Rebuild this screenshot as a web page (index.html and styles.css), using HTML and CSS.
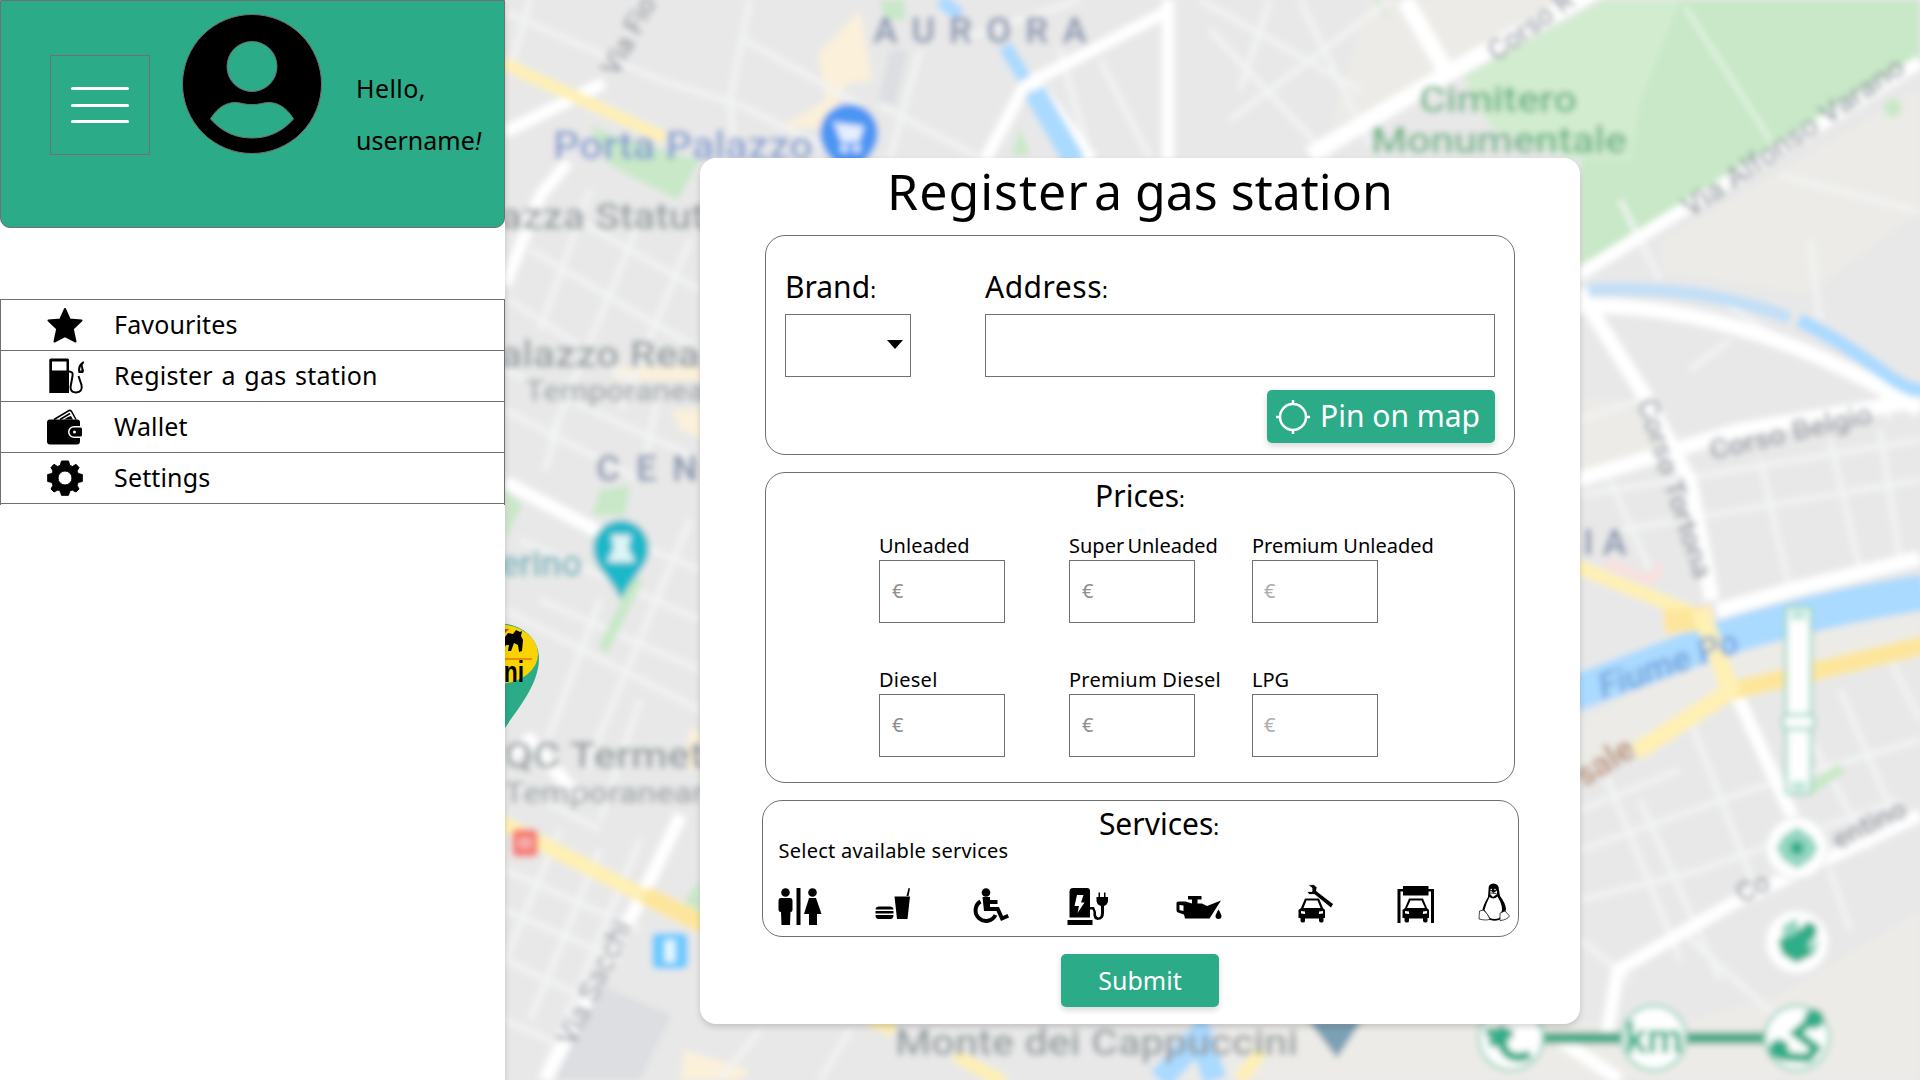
FILE: index.html
```html
<!DOCTYPE html>
<html lang="en">
<head>
<meta charset="utf-8">
<title>Register a gas station</title>
<link rel="stylesheet" href="styles.css">
</head>
<body>
<div class="app">
  <svg class="map" viewBox="0 0 1920 1080" aria-hidden="true">
    <defs>
      <filter id="soft" x="0" y="0" width="100%" height="100%"><feGaussianBlur stdDeviation="3.400"/></filter>
    </defs>
    <g filter="url(#soft)">
      <rect class="land" x="-20" y="-20" width="1960" height="1120"/>
      <g class="beige">
        <path d="M1370 0H1560L1450 72 1330 130Z"/>
        <path d="M1663 241 1920 90V210L1808 293 1663 272Z"/>
        <path d="M1581 720 1720 650 1920 612V650L1731 691 1581 770Z"/>
        <path d="M1580 1080V1050L1776 998 1920 912V1080Z"/>
        <path d="M1581 400 1630 400 1670 460 1581 475Z"/>
        <path d="M1230 1024H1600V1080H1180Z"/>
      </g>
      <g class="sand">
        <path d="M860 10 872 80 846 84 826 128 780 128 826 100 818 54Z"/>
        <path d="M615 367H705V380H615ZM672 410H705V440L680 430Z"/>
        <path d="M685 1050 750 1070 740 1080H680ZM688 730H700V770H688Z"/>
      </g>
      <path class="block" d="M890 50 908 50 895 105 878 100ZM600 985 672 1015 640 1080H555Z"/>
      <g class="park">
        <path d="M1604 0H1920V58L1581 265V158L1464 76Z"/>
        <path d="M590 125 625 140 700 160 678 200 610 165Z"/>
        <path d="M880 0H905V20H885ZM1373 0 1392 22 1380 0ZM1012 155 1020 128 1030 155ZM600 490 630 485 625 515 592 515ZM505 490 522 505 505 540ZM700 880 685 900 700 920Z"/>
        <circle cx="1893" cy="108" r="9"/>
      </g>
      <path class="cemetery" d="M1464 76 1604 0H1680L1640 103 1631 160H1575L1490 127Z"/>
      <g class="lane">
        <path d="M505 12 660 80 740 105 830 150M750 0 730 100 735 158M530 0 510 70M745 40 860 105M920 50 890 158M1060 50 1090 158M1100 60 1150 158M960 40 1080 0M1200 0 1360 90M1230 120 1390 0M1300 0 1370 145M1210 30 1330 158M1240 90 1270 0M880 105 980 158"/>
        <path d="M560 210 700 290M530 250 700 350M510 300 660 400M590 190 540 330M640 220 550 440M690 240 620 410M505 370 700 460M505 410 640 480M570 380 545 470M660 390 640 480"/>
        <path d="M520 540 700 620M580 520 700 570M600 600 540 760M690 520 585 770M505 610 700 710M540 600 700 670M640 700 600 820M505 870 640 930M560 830 505 960M600 850 530 1020M640 840 540 1080M505 910 620 960M505 960 590 1000M505 1020 560 1045M760 1030 720 1080M850 1030 820 1080M505 780 600 830"/>
        <path d="M1581 495 1920 440M1620 530 1920 480M1810 360 1720 300M1690 370 1730 340M1760 460 1790 590M1830 440 1860 570M1880 430 1900 560M1610 480 1650 570M1810 240 1820 320M1580 420 1640 400M1620 200 1660 280M1780 175 1920 212M1870 370 1890 420"/>
        <path d="M1581 850 1750 790 1920 740M1581 900 1700 870 1900 800M1600 760 1680 960M1690 720 1760 900M1640 800 1720 980M1800 720 1870 850M1840 690 1900 830M1890 660 1920 720M1581 940 1630 980M1680 930 1780 1020M1830 870 1850 930M1581 810 1680 770"/>
      </g>
      <g class="road">
        <path d="M505 132 604 83M568 162 540 196 505 285M1170 10 1025 85 985 160M1030 75 1092 160M1168 0V160" stroke-width="12"/>
        <path d="M1310 155 1450 72 1600 -12M1405 0 1445 69" stroke-width="17"/>
        <path d="M1570 280 1920 62" stroke-width="13"/>
        <path d="M1570 306Q1740 300 1920 410M1578 290 1645 396 1690 482 1712 600M1570 482 1740 430 1920 400M1717 611 1790 590 1920 558" stroke-width="15"/>
        <path d="M1735 691 1803 840M1920 815 1735 902 1618 970 1606 1040M1560 1040 1620 1080" stroke-width="13"/>
        <path d="M505 482 605 535M681 815 645 890 545 1080M505 760 530 740 580 800" stroke-width="13"/>
        <path d="M1685 7 1771 141" stroke-width="5" opacity=".45"/>
      </g>
      <g class="water">
        <path d="M940 0 960 15M1005 46 1025 79" stroke-width="14"/>
        <path d="M1034 91 1075 162" stroke-width="22"/>
        <path class="pale" d="M1588 290Q1700 284 1790 318" stroke-width="13"/>
        <path d="M1799 320Q1840 340 1880 370T1925 385" stroke-width="14"/>
        <path d="M1570 695 1717 640Q1820 608 1925 592" stroke-width="36"/>
        <path d="M1160 1080 1200 1035 1215 1080" stroke-width="24"/>
      </g>
      <g class="highway">
        <path d="M500 62 665 138" stroke-width="12"/>
        <path d="M500 822 700 925" stroke-width="15"/>
        <path class="deep" d="M645 895 705 925M1731 691 1925 645" stroke-width="19"/>
        <path d="M1575 566 1690 612" stroke-width="14"/>
        <path class="deep" d="M1664 622 1712 618" stroke-width="24"/>
        <path d="M1700 610 1731 691 1636 752" stroke-width="18"/>
        <path d="M955 1055 1005 1083M870 1020 895 1030M1262 1050 1240 1080" stroke-width="13"/>
      </g>
      <path class="park-line" d="M638 578 603 650M1808 790 1842 768"/>
      <path class="pink" d="M1605 562 1650 580 1662 565"/>
      <path class="cart-pin" d="M849 104a29 29 0 0 1 29 29c0 18-15 30-29 44-14-14-29-26-29-44a29 29 0 0 1 29-29Z"/>
      <path class="white" d="M832 121 838 123 864 126 859 142H841L836 127ZM841 145H848V152H841ZM853 145H860V152H853Z"/>
      <path class="teal-pin" d="M621 520a28 28 0 0 1 28 28c0 19-17 28-28 52-11-24-28-33-28-52a28 28 0 0 1 28-28Z"/>
      <path class="white" d="M611 535H631L628 548 635 562H607L614 548Z"/>
      <rect class="stop" x="512" y="829" width="26" height="28" rx="5"/>
      <path class="pink" d="M518 843H532" opacity=".5"/>
      <rect class="station" x="652" y="933" width="36" height="36" rx="6"/>
      <path class="white" d="M665 940H675V962H665Z"/>
      <path class="poi" d="M1308 1020H1362L1337 1058Z"/>
      <g class="place">
        <text x="873" y="43" class="district" textLength="214">AURORA</text>
        <text x="596" y="481" class="district" textLength="102">CEN</text>
        <text x="1583" y="555" class="district" textLength="44">IA</text>
        <text x="553" y="159" class="shop" textLength="260" lengthAdjust="spacingAndGlyphs">Porta Palazzo</text>
        <text x="500" y="229" class="sight" textLength="205" lengthAdjust="spacingAndGlyphs">azza Statut</text>
        <text x="500" y="367" class="sight" textLength="200" lengthAdjust="spacingAndGlyphs">alazzo Rea</text>
        <text x="525" y="401" class="note" textLength="180" lengthAdjust="spacingAndGlyphs">Temporanea</text>
        <text x="500" y="576" class="museum" textLength="82" lengthAdjust="spacingAndGlyphs">erino</text>
        <text x="504" y="768" class="sight" textLength="200" lengthAdjust="spacingAndGlyphs">QC Termet</text>
        <text x="504" y="803" class="note" textLength="200" lengthAdjust="spacingAndGlyphs">Temporanear</text>
        <text x="895" y="1055" class="sight" textLength="403" lengthAdjust="spacingAndGlyphs">Monte dei Cappuccini</text>
        <text x="1419" y="112" class="green" textLength="158" lengthAdjust="spacingAndGlyphs">Cimitero</text>
        <text x="1371" y="153" class="green" textLength="256" lengthAdjust="spacingAndGlyphs">Monumentale</text>
        <g class="street">
          <text transform="translate(617 78) rotate(-62)">Via Fio</text>
          <text transform="translate(1496 62) rotate(-36)">Corso R</text>
          <text transform="translate(1690 218) rotate(-34)" textLength="262" lengthAdjust="spacingAndGlyphs">Via Alfonso Varano</text>
          <text transform="translate(1712 460) rotate(-13)" textLength="166" lengthAdjust="spacingAndGlyphs">Corso Belgio</text>
          <text transform="translate(1637 402) rotate(72)" textLength="188" lengthAdjust="spacingAndGlyphs">Corso Tortona</text>
          <text transform="translate(573 1048) rotate(-64)" textLength="136" lengthAdjust="spacingAndGlyphs">Via Sacchi</text>
          <text transform="translate(1742 904) rotate(-28)">Co</text>
          <text transform="translate(1838 850) rotate(-26)">entino</text>
        </g>
        <text class="river" transform="translate(1603 699) rotate(-19)" textLength="146" lengthAdjust="spacingAndGlyphs">Fiume Po</text>
        <text class="brown" transform="translate(1584 788) rotate(-32)">sale</text>
      </g>
      <g class="disc">
        <path class="link" d="M1511 1038H1797"/>
        <rect x="1786" y="607" width="25" height="187" rx="3"/>
        <rect x="1783" y="715" width="31" height="14" rx="4"/>
        <circle class="plain" cx="1797" cy="848" r="31"/>
        <circle class="plain" cx="1797" cy="942" r="32"/>
        <circle cx="1511" cy="1038" r="32"/>
        <circle cx="1654" cy="1038" r="32"/>
        <circle cx="1797" cy="1038" r="32"/>
      </g>
      <path class="mint" d="M1791 610H1806V620H1791ZM1791 781H1806V791H1791Z" opacity=".6"/>
      <path class="mint" d="M1797 827 1811 836 1818 848 1811 860 1797 869 1783 860 1776 848 1783 836Z"/>
      <circle class="accent" cx="1797" cy="848" r="7"/>
      <path class="mint" d="M1783 925 1797 918 1800 935 1782 938ZM1808 945 1819 940 1815 955 1806 957Z"/>
      <path class="accent" d="M1778 940 1795 934 1808 921 1817 926 1816 937 1808 944 1811 956 1796 963 1782 954Z"/>
      <path class="glyph" d="M1530 1054C1510 1064 1496 1049 1503 1026M1486 1032 1513 1034M1489 1042H1508M1814 1018 1796 1033 1816 1048 1808 1058 1780 1056"/>
      <circle class="accent" cx="1814" cy="1019" r="10"/>
      <circle class="accent" cx="1779" cy="1049" r="10"/>
      <text class="km" x="1625" y="1053" textLength="58" lengthAdjust="spacingAndGlyphs">km</text>
    </g>
    <g>
      <path class="eni-pin" d="M500 623.500C523 623.500 539 640 539 658 539 684 519 707 505 728L480 740V624Z"/>
      <ellipse class="eni-badge" cx="500" cy="654" rx="38" ry="29.500"/>
      <path d="M505 637 508 633 513 634 516 630 520 632 522 631 521 636 523 640 522 651 519 652 518 645 514 643 511 651 508 651 509 645 506 645 503 650Z"/>
      <path class="eni-red" d="M500 629 509 629 505 633ZM500 658.500H532V659.500H500Z"/>
      <text class="eni-text" x="491" y="682" textLength="33" lengthAdjust="spacingAndGlyphs">eni</text>
    </g>
  </svg>

  <aside class="sidebar">
    <header class="profile">
      <button class="burger" aria-label="Menu"><span></span><span></span><span></span></button>
      <svg class="avatar" viewBox="0 0 140 140">
        <path fill-rule="evenodd" stroke="#707070" d="M70 .5a69.500 69.500 0 1 1 0 139 69.500 69.500 0 1 1 0-139ZM70 27.500a25 25 0 1 0 0 50 25 25 0 1 0 0-50ZM28.500 105C41 119 55 124 70 124S99 119 111.500 105C104 92 92 86 80 89.500 72 91 68 91 60 89.500 48 86 36 92 28.500 105Z"/>
      </svg>
      <p class="greeting"><span class="hello">Hello,</span><br><span class="user">username<i>!</i></span></p>
    </header>
    <nav class="menu">
      <a class="item"><svg viewBox="0 0 36 36"><path stroke="#000" stroke-width="2" stroke-linejoin="round" d="M18 2 22.700 12.500 34.500 13.500 25.800 21.800 28.500 34.500 18 29 7.500 34.500 10.200 21.800 1.500 13.500 13.300 12.500Z"/></svg><span class="t-fav">Favourites</span></a>
      <a class="item"><svg viewBox="0 0 36 36"><path fill-rule="evenodd" d="M2.300 2Q2.300.500 4 .500H20.500Q22 .500 22 2V35H2.300ZM5 3.500V12.500H19.500V3.500Z"/><path fill="none" stroke="#000" stroke-width="2" d="M22 13.500Q26.500 13.500 25.500 18L23.500 29Q23.500 34.500 29 34.500 36 34 34.500 27L31.500 18"/><path fill-rule="evenodd" d="M36.500 3 37 5 35.500 7 37 13 36 15 31.500 15 31 12Q31 6 36.500 3ZM34 8 32.800 12.500H34.500Z"/></svg><span class="t-reg">Register a gas station</span></a>
      <a class="item"><svg viewBox="0 0 36 36"><path d="M3 10.500H30Q33 10.500 33 13.500V17H27A6 6 0 0 0 27 29H33V32Q33 35.500 30 35.500H3Q0 35.500 0 32.500V13.500Q0 10.500 3 10.500Z"/><path fill="none" stroke="#000" stroke-width="1.500" d="M7 10.500 22 1.500Q23.500 1 24.500 2.500L29 10.500M13 10.500 23 4.500"/><path fill-rule="evenodd" d="M27 18.500H33.500Q35 18.500 35 20V26Q35 27.500 33.500 27.500H27A4.500 4.500 0 0 1 27 18.500ZM27.500 21.500A1.500 1.500 0 1 0 27.500 24.500 1.500 1.500 0 1 0 27.500 21.500Z"/><path d="M21 8 24 7 26 10.500H17Z"/></svg><span class="t-wal">Wallet</span></a>
      <a class="item"><svg viewBox="0 0 36 36"><path fill-rule="evenodd" stroke="#000" stroke-linejoin="round" d="M14.500 1H21.500L22.700 5.300 25.500 6.500 29 4.300 32 7.500 30 11 31.200 13.600 35.300 14.500V21.500L31.200 22.400 30 25.200 32 29 29 32 25.200 30 22.700 31.200 21.500 35.300H14.500L13.300 31.200 10.800 30 7 32 4 29 6 25.200 4.800 22.400.700 21.500V14.500L4.800 13.600 6 11 4 7.500 7 4.300 10.500 6.500 13.300 5.300ZM18 11A7 7 0 1 0 18 25 7 7 0 1 0 18 11Z"/></svg><span class="t-set">Settings</span></a>
    </nav>
  </aside>

  <main class="stage">
    <form class="dialog">
      <h1><span class="lead">Register</span> a gas station</h1>
      <section class="box place-box">
        <div class="fields">
          <div class="field"><label class="big t-brand">Brand<i>:</i></label><div class="input select"><span class="caret"></span></div></div>
          <div class="field"><label class="big t-addr">Address<i>:</i></label><div class="input"></div></div>
        </div>
        <button type="button" class="btn pin">
          <svg viewBox="0 0 34 34"><g fill="none" stroke="#fff" stroke-width="2.500"><circle cx="17" cy="17" r="13"/><path d="M17 0V5M17 29V34M0 17H5M29 17H34"/></g></svg>
          <span class="t-pin">Pin on map</span>
        </button>
      </section>
      <section class="box prices">
        <h2 class="big t-prices">Prices<i>:</i></h2>
        <div class="price-grid">
          <div class="price"><label>Unleaded</label><div class="input">€</div></div>
          <div class="price"><label class="super">Super Unleaded</label><div class="input">€</div></div>
          <div class="price light"><label>Premium Unleaded</label><div class="input">€</div></div>
          <div class="price"><label class="wide">Diesel</label><div class="input">€</div></div>
          <div class="price"><label class="wide">Premium Diesel</label><div class="input">€</div></div>
          <div class="price light"><label>LPG</label><div class="input">€</div></div>
        </div>
      </section>
      <section class="box services">
        <h2 class="big t-serv">Services<i>:</i></h2>
        <p class="hint">Select available services</p>
        <div class="icons">
          <svg width="44" height="42" viewBox="0 0 44 42"><circle cx="7.500" cy="9.500" r="4.300"/><path d="M3 15H12Q14.500 15 14.500 18V27Q14.500 29 12.500 29L12 42H3.500L3 29Q.500 29 .500 27V18Q.500 15 3 15ZM18.500 5H22.500V42H18.500ZM31 15H38L43.500 31H39V42H31V31H26Z"/><circle cx="34.500" cy="9.500" r="4.300"/></svg>
          <svg width="36" height="42" viewBox="0 0 36 42"><path d="M19.500 13.500H35L32.500 36H22ZM31.500 13 33.500 5 35 5.500 33.500 13ZM3.500 23.500H15.500Q18.500 24 18.500 26.500H.500Q.500 24 3.500 23.500ZM.500 28H18.500V30.500H.500ZM.500 32H18.500Q18.500 36 15.500 36H3.500Q.500 36 .500 32Z"/></svg>
          <svg width="38" height="42" viewBox="0 0 38 42"><circle cx="14" cy="9.500" r="4.300"/><path d="M10.500 14H18V17H25.500V21H18V24H27L31 33 35.500 31 37 34.500 29 38 24.500 28H12Z"/><path fill="none" stroke="#000" stroke-width="4" d="M8.500 18.500A10.500 10.500 0 1 0 23.500 32"/></svg>
          <svg width="42" height="42" viewBox="0 0 42 42"><path fill-rule="evenodd" d="M6 5H20Q23 5 23 8V34.500H2.500V8.500Q2.500 5 6 5ZM10 12 7.500 23H12L10.500 30 17.500 19.500H14L16.500 12ZM.500 37H25.500V42H.500Z"/><path d="M31.500 9.500H33V14H37V9.500H38.500V14H41V18Q40.500 22 37 23V30Q37 37 30.500 37 25.500 36 26.500 29L25.500 26.500H22.500V24H27L29 29Q28.500 34 31.500 34.500 34 34 34 30V23Q30 22 29.500 18V14H31.500Z"/></svg>
          <svg width="48" height="42" viewBox="0 0 48 42"><path fill-rule="evenodd" d="M12 13H25.500V16.500H21.500V20.500H26L31 23 45 17.500 33.500 35.500H9L8 31.500 2 29.500Q.500 29 .500 27V20Q.500 18.500 2.500 18.500H9.500L16 20.500V16.500H12ZM3.500 22V27L7.500 28V22.500Z"/><path d="M42.500 26.500Q45.500 31.500 45.500 33A3 3 0 1 1 39.500 33Q39.500 31.500 42.500 26.500Z"/></svg>
          <svg width="36" height="42" viewBox="0 0 36 42"><path fill-rule="evenodd" d="M7 15.500H21L25 25 27 27V35H25.500V38Q25.500 39.500 23.500 39.500T21 38V35.500H7V38Q7 39.500 5 39.500T2.500 38V35H.500V27L3 25ZM8.500 17.500 5.500 25H22.500L19.500 17.500ZM3 28V30.500L7 31V28.500ZM25 28 21 28.500V31L25 30.500Z"/><path stroke="#fff" stroke-width=".8" d="M10 2 16 1.500 19 4.500 18.500 8 35.500 21 33 25 16.500 11.500 11 11.500 9 8.500H14V5Z"/></svg>
          <svg width="38" height="42" viewBox="0 0 38 42"><path fill-rule="evenodd" d="M6 3H31.500V6H37V40H34V8.500H31.500V12.500H6V8.500H3.500V40H.500V6H6ZM12 15.500H26L30 25 32 27V35H30.500V38Q30.500 39.500 28.500 39.500T26 38V35.500H12V38Q12 39.500 10 39.500T7.500 38V35H5.500V27L8 25ZM13.500 17.500 10 25H28L24.500 17.500ZM8 28V30.500L12 31V28.500ZM30 28 26 28.500V31L30 30.500Z"/></svg>
          <svg width="32" height="42" viewBox="0 0 32 42"><path d="M15.500.500Q21 .500 21 7L22 13Q27.500 20 28 26L26 33 21 37Q15 39 10 36L4 29Q5 22 10 14L10.500 7Q10 .500 15.500 .500Z"/><path fill="#fff" d="M11.500 14Q15.500 17 19.500 13.500 24.500 22 24 27L21.500 35Q16 37 12 35L6.500 27Q8 21 11.500 14ZM12.500 7.500 15.500 10 19 7.500 19 11 15 14 12 11Z"/><path fill="#fff" stroke="#000" stroke-width=".7" d="M5.500 27Q10 31 12 36 9 38 1 36L1.500 28ZM22 30 27 28 31.500 33Q29 37 22 37.500Z"/><path stroke="#000" stroke-width=".8" d="M12 10 18.500 10.500"/><circle cx="13.300" cy="6.500" r=".8" fill="#fff"/><circle cx="17" cy="6.500" r=".8" fill="#fff"/></svg>
        </div>
      </section>
      <button type="button" class="btn submit"><span class="t-sub">Submit</span></button>
    </form>
  </main>
</div>
</body>
</html>
```
FILE: styles.css
```css
* { box-sizing: border-box; margin: 0; padding: 0; }
body { font-family: "Noto Sans", "Open Sans", sans-serif; color: #000; background: #fff; overflow: hidden; }
button { font: inherit; border: 0; background: none; }
i { font-size: .72em; line-height: 0; }

.app { position: relative; display: grid; grid-template-columns: 505px 1fr; width: 1920px; height: 1080px; }
.map { position: absolute; inset: 0; width: 1920px; height: 1080px; }

/* map layers */
.land { fill: #e8e8e8; }
.beige { fill: #ecebe7; }
.sand { fill: #fbf0da; }
.block { fill: #dcdee1; }
.park { fill: #c8e8c7; }
.cemetery { fill: #d2ecd0; }
.lane { fill: none; stroke: #f3f4f4; stroke-width: 5; }
.road { fill: none; stroke: #fff; }
.water { fill: none; stroke: #aadaff; }
.water .pale { stroke: #c3dff7; }
.highway { fill: none; stroke: #fff0b3; stroke-linejoin: round; }
.highway .deep { stroke: #fde69b; }
.park-line { fill: none; stroke: #c8e8c7; stroke-width: 11; }
.pink { fill: none; stroke: #f9e0e0; stroke-width: 10; }
.cart-pin { fill: #4b96f3; }
.teal-pin { fill: #1db8c9; }
.white { fill: #fff; opacity: .85; }
.stop { fill: #f47c74; }
.station { fill: #6ccbff; }
.poi { fill: #7ba0b4; }
.place { font-family: Roboto, sans-serif; font-weight: 500; }
.district { font-size: 37px; font-weight: 700; fill: #8e9ab3; }
.shop { font-size: 38px; fill: #7f9bd0; }
.sight { font-size: 37px; fill: #939b9f; }
.note { font-size: 29px; fill: #a0a7ab; }
.museum { font-size: 37px; fill: #6fb4bb; }
.green { font-size: 37px; fill: #66b283; }
.street { font-size: 28px; fill: #959ca4; }
.river { font-size: 35px; font-style: italic; fill: #6f9fdc; }
.brown { font-size: 34px; fill: #b5835f; }
.disc { fill: #fff; stroke: #8fd0bb; stroke-width: 3; }
.disc .plain { stroke: #e4e6e6; stroke-width: 2; }
.disc .link { stroke: #4caa8b; stroke-width: 12; }
.mint { fill: #94d6c2; }
.accent { fill: #2fae89; }
.glyph { fill: none; stroke: #2fae89; stroke-width: 9; }
.km { font: 700 42px Roboto, sans-serif; fill: #38b28f; }
.eni-pin { fill: #2bab87; }
.eni-badge { fill: #fad400; }
.eni-red { fill: #e2401c; }
.eni-text { font: 700 29px "Liberation Sans", sans-serif; }

/* sidebar */
.sidebar { position: relative; background: #fff; box-shadow: 0 3px 6px rgba(0, 0, 0, .16); }
.profile { display: flex; width: 505px; height: 228px; padding-left: 49px; background: #2bab87; border: 1px solid #707070; border-radius: 0 0 10px 10px; }
.burger { display: flex; flex-direction: column; justify-content: center; align-items: center; gap: 13.500px; width: 100px; height: 100px; margin-top: 54px; border: 1px solid #707070; }
.burger span { width: 58px; height: 3px; border-radius: 2px; background: #fff; }
.avatar { width: 140px; height: 140px; margin: 13px 0 0 32px; }
.greeting { margin: 61px 0 0 34px; font-size: 25px; line-height: 52px; white-space: nowrap; }
.greeting i { font-size: 25px; font-family: "Liberation Sans", sans-serif; }
.hello { letter-spacing: .4px; }
.menu { margin-top: 71px; height: 206px; border: 1px solid #707070; border-bottom: 0; }
.item { display: flex; align-items: center; height: 51px; padding-left: 46px; border-bottom: 1px solid #707070; font-size: 25px; line-height: 50px; letter-spacing: .15px; }
.item svg { width: 36px; height: 36px; margin: -1px 31px 0 0; overflow: visible; }
.item span { margin-top: -3px; }
.t-reg { letter-spacing: .25px; word-spacing: 1.800px; }

/* dialog */
.stage { position: relative; padding: 158px 0 0 195px; }
.dialog { display: flex; flex-direction: column; align-items: center; width: 880px; height: 866px; background: #fff; border-radius: 16px; box-shadow: 0 3px 6px rgba(0, 0, 0, .16); }
h1 { height: 65px; font-size: 50px; font-weight: 400; line-height: 67px; white-space: nowrap; }
.lead { margin-right: -8px; letter-spacing: 1px; }
h2 { font-weight: 400; }
.big { font-size: 30px; line-height: 46px; height: 44px; }
.big i { font-style: normal; }
.box { width: 750px; border: 1px solid #707070; border-radius: 20px; }
.place-box { display: flex; flex-direction: column; height: 220px; margin-top: 12px; padding: 30px 19px 0; }
.fields { display: grid; grid-template-columns: 126px 1fr; gap: 74px; }
.field { display: flex; flex-direction: column; gap: 8px; }
.field .big { height: 40px; line-height: 42px; }
.t-addr { letter-spacing: .5px; }
.input { display: flex; align-items: center; height: 63px; border: 1px solid #707070; }
.select { justify-content: flex-end; padding: 0 7px 2px 0; }
.caret { border: 8.500px solid transparent; border-top: 9px solid #000; border-bottom: 0; }
.btn { display: flex; align-items: center; height: 53px; border-radius: 5px; background: #2bab87; color: #fff; box-shadow: 0 3px 6px rgba(0, 0, 0, .16); white-space: nowrap; }
.pin { align-self: flex-end; width: 228px; margin-top: 13px; padding-left: 9px; font-size: 30px; }
.pin svg { width: 34px; height: 34px; margin-right: 10px; }
.pin span, .submit span { margin-top: -2px; }
.prices { height: 311px; margin-top: 17px; text-align: center; }
.price-grid { display: grid; grid-template-columns: 190px 183px 200px; row-gap: 45px; margin: 17px 0 0 113px; text-align: left; }
.price { font-size: 20px; line-height: 24px; white-space: nowrap; }
.price label { display: block; margin-bottom: 2px; }
.super { word-spacing: -2px; }
.wide { letter-spacing: .25px; }
.price .input { width: 126px; padding: 0 0 2px 12px; color: #8f8f8f; }
.price.light .input { padding-left: 11px; color: #adadad; }
.services { width: 757px; height: 137px; margin-top: 17px; padding-left: 15px; }
.services h2 { margin-left: 23px; text-align: center; }
.hint { margin: -6px 0 0 1px; font-size: 20px; line-height: 24px; letter-spacing: .25px; }
.icons { display: grid; grid-template-columns: 97px 97px 95px 109px 122px 99px 81px 32px; margin-top: 20px; }
.submit { justify-content: center; width: 158px; margin-top: 17px; font-size: 25px; }
```
